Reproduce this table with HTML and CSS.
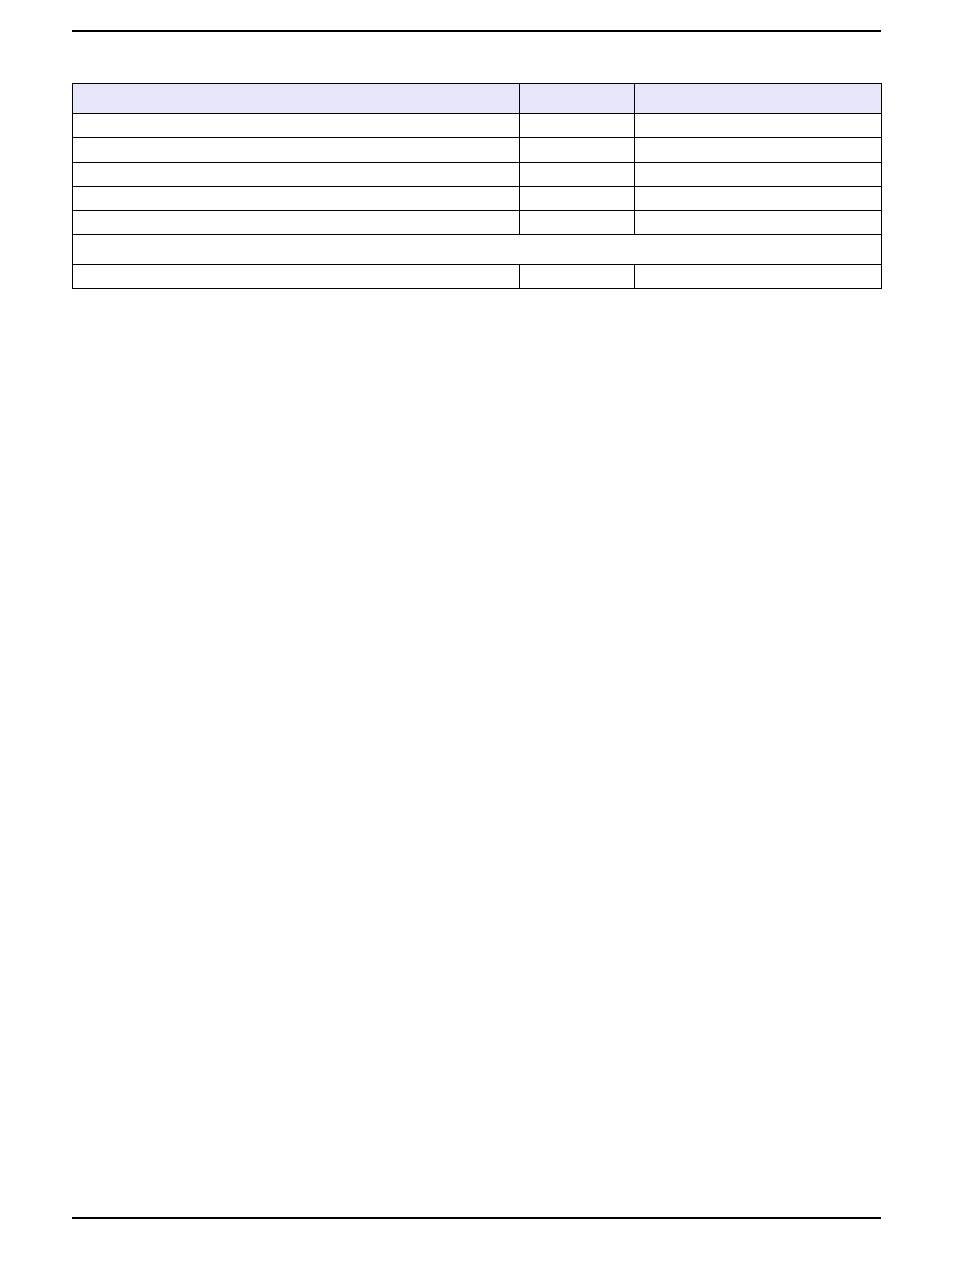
FILE: index.html
```html
<!DOCTYPE html>
<html>
<head>
<meta charset="utf-8">
<link rel="stylesheet" href="styles.css">
</head>
<body>
<div class="page">
  <div class="rule"></div>
  <table class="spec">
    <colgroup>
      <col class="c1"><col class="c2"><col class="c3">
    </colgroup>
    <tr class="head"><td></td><td></td><td></td></tr>
    <tr class="r"><td></td><td></td><td></td></tr>
    <tr class="r r25"><td></td><td></td><td></td></tr>
    <tr class="r"><td></td><td></td><td></td></tr>
    <tr class="r"><td></td><td></td><td></td></tr>
    <tr class="r"><td></td><td></td><td></td></tr>
    <tr class="span"><td colspan="3"></td></tr>
    <tr class="r"><td></td><td></td><td></td></tr>
  </table>
  <div class="rule bottom"></div>
</div>
</body>
</html>
```
FILE: styles.css
```css
html, body {
  margin: 0;
  padding: 0;
  background: #ffffff;
  font-family: "Liberation Sans", Arial, sans-serif;
}
.page {
  box-sizing: border-box;
  height: 1270px;
  padding: 30px 0 51px 72px;
  display: flex;
  flex-direction: column;
}
.rule {
  width: 809px;
  height: 2px;
  background: #000;
}
.bottom {
  margin-top: auto;
}
.spec {
  margin-top: 51px;
  width: 809px;
  border-collapse: collapse;
  table-layout: fixed;
}
.spec td {
  border: 1px solid #000;
  padding: 0;
}
.c1 { width: 447px; }
.c2 { width: 115px; }
.c3 { width: 247px; }
.head td {
  background: #e6e6fa;
  height: 29px;
}
.r td { height: 23px; }
.r25 td { height: 24px; }
.span td { height: 29px; }
```
